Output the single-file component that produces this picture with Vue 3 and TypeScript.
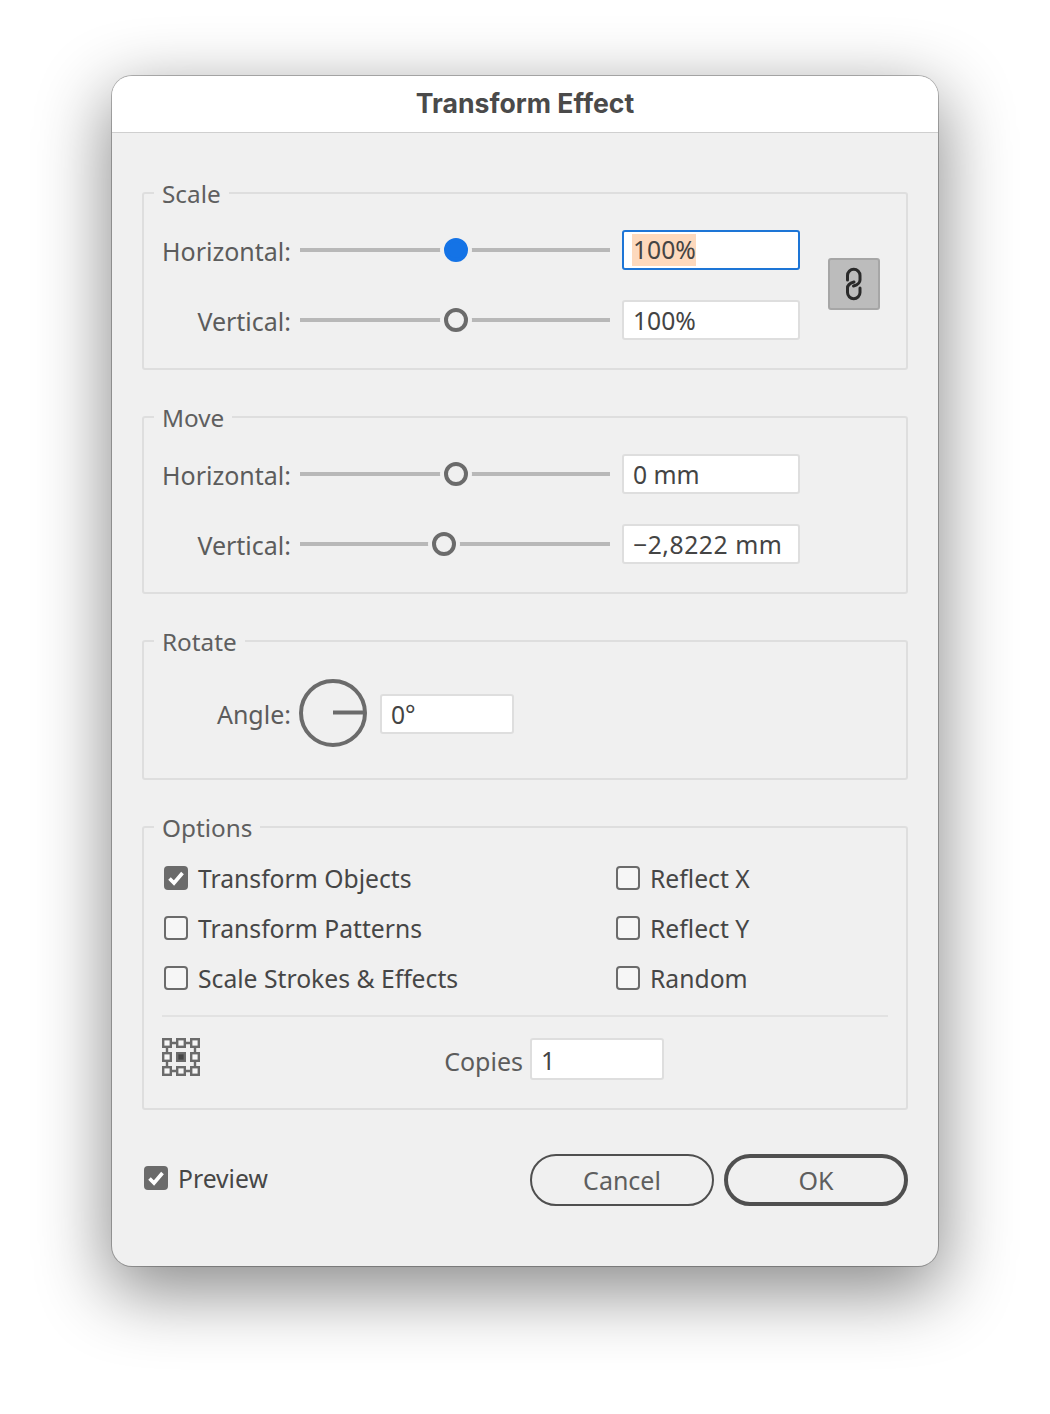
<script setup lang="ts">
interface Option { label: string; checked: boolean }
const scaleRows = [
  { label: 'Horizontal:', value: '100%', pos: 156, active: true },
  { label: 'Vertical:', value: '100%', pos: 156, active: false },
]
const moveRows = [
  { label: 'Horizontal:', value: '0 mm', pos: 156, long: false },
  { label: 'Vertical:', value: '−2,8222 mm', pos: 144, long: true },
]
const leftOptions: Option[] = [
  { label: 'Transform Objects', checked: true },
  { label: 'Transform Patterns', checked: false },
  { label: 'Scale Strokes & Effects', checked: false },
]
const rightOptions: Option[] = [
  { label: 'Reflect X', checked: false },
  { label: 'Reflect Y', checked: false },
  { label: 'Random', checked: false },
]
const gridCoords = [1, 15, 29]
</script>

<template>
  <div class="page">
    <div class="window">
      <div class="titlebar">Transform Effect</div>
      <div class="content">
        <section class="group">
          <div class="legend">Scale</div>
          <div class="scale-body">
            <div class="rows">
              <div v-for="r in scaleRows" :key="r.label" class="row">
                <span class="label">{{ r.label }}</span>
                <div class="slider">
                  <i class="track" />
                  <i class="thumb" :class="{ active: r.active }" :style="{ left: r.pos + 'px' }" />
                </div>
                <div class="field wide" :class="{ focus: r.active }">
                  <span :class="{ selected: r.active }">{{ r.value }}</span>
                </div>
              </div>
            </div>
            <div class="link">
              <svg width="18" height="34" viewBox="0 0 18 34" fill="none" stroke="#2a2a2a" stroke-width="3" stroke-linecap="round">
                <path d="M2.500 13V8.500a6.250 6.250 0 0 1 12.500 0V13c0 3-3 5-6.500 6" />
                <path d="M15 21v4.500a6.250 6.250 0 0 1-12.500 0V21c0-3 3-5 6.500-6" />
              </svg>
            </div>
          </div>
        </section>

        <section class="group">
          <div class="legend">Move</div>
          <div class="rows">
            <div v-for="r in moveRows" :key="r.label" class="row">
              <span class="label">{{ r.label }}</span>
              <div class="slider">
                <i class="track" />
                <i class="thumb" :style="{ left: r.pos + 'px' }" />
              </div>
              <div class="field wide"><span :class="{ spaced: r.long }">{{ r.value }}</span></div>
            </div>
          </div>
        </section>

        <section class="group">
          <div class="legend">Rotate</div>
          <div class="angle-row">
            <span class="label">Angle:</span>
            <svg class="dial" width="68" height="68" viewBox="0 0 68 68" fill="none" stroke="#6b6b6b">
              <circle cx="34" cy="34" r="32" stroke-width="4" />
              <path d="M34 33.500H66" stroke-width="4" />
            </svg>
            <div class="field narrow nudge"><span>0°</span></div>
          </div>
        </section>

        <section class="group">
          <div class="legend">Options</div>
          <div class="options">
            <div class="opt-col">
              <label v-for="o in leftOptions" :key="o.label" class="opt">
                <span class="box" :class="{ on: o.checked }">
                  <svg v-if="o.checked" width="24" height="24" viewBox="0 0 24 24" fill="none" stroke="#fff" stroke-width="3.600">
                    <path d="M5.500 12.500l4.500 4.500 8.500-10" />
                  </svg>
                </span>
                <span class="opt-text">{{ o.label }}</span>
              </label>
            </div>
            <div class="opt-col">
              <label v-for="o in rightOptions" :key="o.label" class="opt">
                <span class="box" />
                <span class="opt-text">{{ o.label }}</span>
              </label>
            </div>
          </div>
          <div class="divider" />
          <div class="copies-row">
            <svg class="grid" width="38" height="38" viewBox="0 0 38 38" fill="none" stroke="#6b6b6b" stroke-width="2.400">
              <template v-for="y in gridCoords" :key="y">
                <rect v-for="x in gridCoords" :key="x" :x="x + 0.2" :y="y + 0.2" width="7.600" height="7.600" fill="#f6f6f6" />
              </template>
              <path d="M10 5h4M24 5h4M10 33h4M24 33h4M5 10v4M5 24v4M33 10v4M33 24v4" />
              <rect x="15.200" y="15.200" width="7.600" height="7.600" fill="#444" />
            </svg>
            <span class="copies-label">Copies</span>
            <div class="field narrow tall"><span>1</span></div>
          </div>
        </section>

        <div class="footer">
          <label class="opt preview">
            <span class="box on">
              <svg width="24" height="24" viewBox="0 0 24 24" fill="none" stroke="#fff" stroke-width="3.600">
                <path d="M5.500 12.500l4.500 4.500 8.500-10" />
              </svg>
            </span>
            <span class="opt-text">Preview</span>
          </label>
          <div class="buttons">
            <button class="btn">Cancel</button>
            <button class="btn primary">OK</button>
          </div>
        </div>
      </div>
    </div>
  </div>
</template>

<style>
html, body { background: #fff; }
</style>

<style scoped>
.page {
  width: 1050px;
  height: 1414px;
  box-sizing: border-box;
  padding: 76px 112px 0;
  overflow: hidden;
  background: #fff;
  font-family: "Noto Sans", "Open Sans", sans-serif;
  font-size: 25px;
}
.window {
  width: 826px;
  height: 1190px;
  border-radius: 20px;
  background: #f0f0f0;
  box-shadow: 0 0 0 1px rgba(0, 0, 0, 0.26), 0 22px 70px 4px rgba(0, 0, 0, 0.46);
}
.titlebar {
  height: 56px;
  line-height: 55px;
  background: #fff;
  border-radius: 20px 20px 0 0;
  border-bottom: 1px solid #cfcfcf;
  text-align: center;
  font-family: Inter, Roboto, sans-serif;
  font-weight: 700;
  font-size: 26.600px;
  color: #4a4a4a;
}
.content {
  padding: 59px 30px 0;
}
.group {
  position: relative;
  box-sizing: border-box;
  border: 2px solid #dedede;
  border-radius: 3px;
  padding: 36px 18px 28px;
  margin-bottom: 46px;
}
.legend {
  position: absolute;
  left: 10px;
  top: -16px;
  padding: 0 8px;
  line-height: 32px;
  font-size: 24.300px;
  background: #f0f0f0;
  color: #5f5f5f;
}
.scale-body {
  display: flex;
  align-items: center;
}
.rows {
  display: flex;
  flex-direction: column;
  gap: 30px;
}
.row {
  display: flex;
  align-items: center;
  height: 40px;
}
.label {
  width: 129px;
  padding-top: 1px;
  text-align: right;
  color: #5c5c5c;
  white-space: nowrap;
}
.slider {
  position: relative;
  width: 310px;
  height: 24px;
  margin: 0 12px 0 9px;
}
.track {
  position: absolute;
  left: 0;
  right: 0;
  top: 10px;
  height: 4px;
  background: #b8b8b8;
}
.thumb {
  position: absolute;
  top: 0;
  width: 24px;
  height: 24px;
  box-sizing: border-box;
  margin-left: -12px;
  border: 4px solid #6b6b6b;
  border-radius: 50%;
  background: #f0f0f0;
  box-shadow: 0 0 0 4px #f0f0f0;
}
.thumb.active {
  background: #1473e6;
  border-color: #1473e6;
}
.field {
  box-sizing: border-box;
  height: 40px;
  padding-left: 9px;
  line-height: 37px;
  font-size: 24.700px;
  background: #fff;
  border: 2px solid #dedede;
  border-radius: 3px;
  color: #444;
  white-space: nowrap;
}
.field.wide { width: 178px; }
.field.narrow { width: 134px; }
.field.nudge { margin-top: 1px; }
.field.tall { height: 42px; line-height: 41px; }
.field.focus { border-color: #1d75d6; }
.spaced { letter-spacing: 0.55px; }
.selected {
  display: inline-block;
  height: 32px;
  line-height: 32px;
  vertical-align: top;
  margin: 2px 0 0 -1px;
  padding: 0 0 0 1px;
  background: #fdd9bd;
}
.link {
  display: flex;
  align-items: center;
  justify-content: center;
  box-sizing: border-box;
  width: 52px;
  height: 52px;
  margin: -3px 0 0 28px;
  background: #bcbcbc;
  border: 2px solid #a6a6a6;
  border-radius: 3px;
}
.angle-row {
  display: flex;
  align-items: center;
  height: 68px;
  margin-top: 1px;
  margin-bottom: 3px;
}
.dial { margin: 0 13px 0 8px; }
.options {
  display: flex;
  padding-top: 2px;
}
.opt-col {
  display: flex;
  flex-direction: column;
  gap: 26px;
}
.opt-col:first-child { width: 452px; }
.opt {
  display: flex;
  align-items: center;
  height: 24px;
  gap: 10px;
  margin-left: 2px;
  color: #464646;
  white-space: nowrap;
  font-size: 24.700px;
}
.opt-text { padding-top: 1px; }
.box {
  box-sizing: border-box;
  flex: none;
  width: 24px;
  height: 24px;
  border: 2px solid #6b6b6b;
  border-radius: 4px;
  background: #f6f6f6;
  overflow: hidden;
}
.box.on {
  border: 0;
  background: #6b6b6b;
}
.box svg { display: block; }
.divider {
  height: 2px;
  margin-top: 25px;
  background: #e2e2e2;
}
.copies-row {
  display: flex;
  align-items: flex-start;
  height: 42px;
  margin-top: 21px;
  margin-bottom: 0;
}
.grid { display: block; }
.copies-label {
  width: 323px;
  margin-right: 7px;
  text-align: right;
  line-height: 46px;
  height: 42px;
  color: #5c5c5c;
}
.footer {
  display: flex;
  align-items: center;
  justify-content: space-between;
  height: 52px;
  margin-top: -2px;
}
.preview { margin-left: 2px; margin-top: -4px; }
.buttons {
  display: flex;
  gap: 10px;
}
.btn {
  box-sizing: border-box;
  width: 184px;
  height: 52px;
  padding: 0;
  border: 2px solid #4f4f4f;
  border-radius: 26px;
  background: #f0f0f0;
  font: inherit;
  color: #5e5e5e;
}
.btn.primary { border-width: 4px; }
</style>
